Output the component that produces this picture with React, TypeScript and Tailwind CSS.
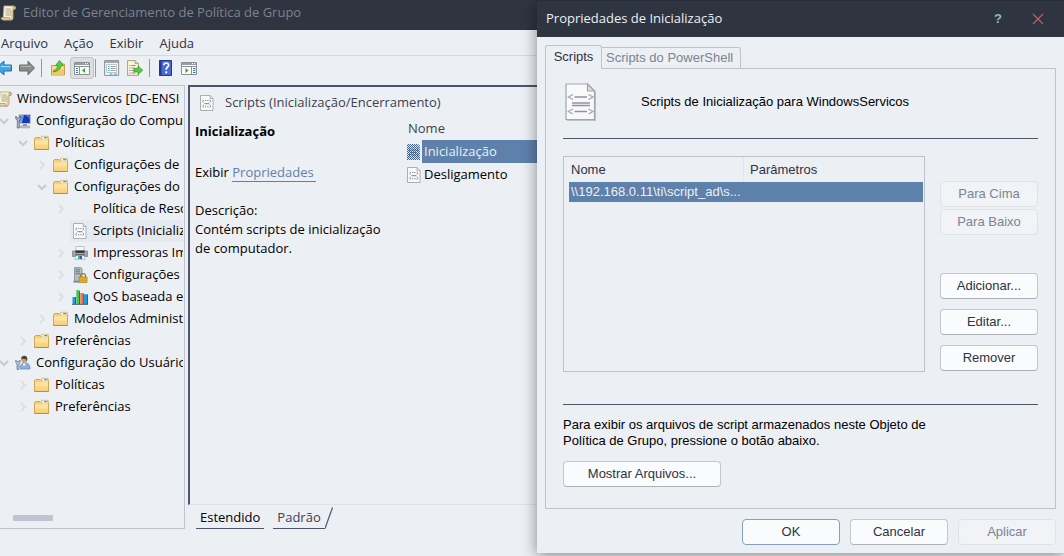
import React from 'react';
import clsx from 'clsx';

/* ---------- icons ---------- */

function ScrollIcon({ clipped = false, className }: { clipped?: boolean; className?: string }) {
  return (
    <svg viewBox={clipped ? '4 0 12 16' : '0 0 16 16'} className={clsx('shrink-0', className)} aria-hidden="true">
      <path d="M4 1h9.500q2 0 2 1.800t-2 1.700H13v8.500q0 2-2 2H3z" fill="#f7f1da" stroke="#b5ab86" strokeWidth=".9" />
      <path d="M13 4.800V2.800q0-1.500 1-1.500 1.500.2 1.500 1.800T13 4.800z" fill="#d8c78f" stroke="#a18f5b" strokeWidth=".7" />
      <path d="M12 5v8q0 1.500-1 1.700" fill="none" stroke="#d6c07c" strokeWidth="1.600" />
      <path d="M1 12.500h8.500q0 2.500 1.800 2.500H3q-2 0-2-2.500z" fill="#e3d5a2" stroke="#a18f5b" strokeWidth=".7" />
      <path d="M5.500 4H11M5.500 6H11M5.500 8H11M5.500 10H11" stroke="#9b957a" strokeWidth=".8" />
    </svg>
  );
}

function FolderIcon() {
  return (
    <svg viewBox="0 0 16 16" className="size-4 shrink-0" aria-hidden="true">
      <path d="M.5 3.500 1.500 2.500H6l1 1h7.500v10.900H.5z" fill="#f3cf7b" stroke="#c9a14c" strokeWidth=".9" />
      <path d="M7.500 1.300h6.700v2.900H7.500z" fill="#fbf8ec" stroke="#c9b47a" strokeWidth=".8" />
      <path d="M10.200 2h3.200v1.200h-3.200z" fill="#4a97e6" />
      <path d="M1 5.300h5.800l1-1H14v9.600H1z" fill="#fde29c" />
      <path d="M1 9.500h13v4.400H1z" fill="#f9d582" />
      <path d="M.5 14.400h14" stroke="#b98c35" />
    </svg>
  );
}

function ScriptIcon({ className = 'size-4' }: { className?: string }) {
  return (
    <svg viewBox="0 0 16 16" className={clsx('shrink-0', className)} aria-hidden="true">
      <path d="M1.500.500h9.500l3 3v12H1.500z" fill="#fbfbfc" stroke="#a3a6aa" strokeWidth=".9" />
      <path d="M11 .5v3h3" fill="#dfe1e4" stroke="#a3a6aa" strokeWidth=".8" />
      <path d="M5 4.800 3.500 6.200 5 7.600M10.500 4.800 12 6.200l-1.500 1.400M5 9.800l-1.500 1.400L5 12.600M10.500 9.800l1.500 1.400-1.500 1.400" fill="none" stroke="#85858f" strokeWidth=".9" />
      <path d="M6 5.500h1.200M8.300 5.500h1.200M5.500 8.700h4.600M6 11.700h1.200M8.300 11.700h1.200" stroke="#6c6c7c" strokeWidth=".9" />
    </svg>
  );
}

function SelectedScriptIcon() {
  return (
    <svg viewBox="0 0 16 16" className="size-4 shrink-0" aria-hidden="true">
      <defs>
        <pattern id="dither" width="2" height="2" patternUnits="userSpaceOnUse">
          <path d="M0 0h1v1H0zM1 1h1v1H1z" fill="#45658f" />
        </pattern>
      </defs>
      <path d="M1 0h11l2 2v14H1z" fill="#dde1e8" />
      <path d="M3.500 4.500v3M11.500 4.500v3M5 6h5M5 8.500h5M5 11h5M3.500 9.500v3M11.500 9.500v3" stroke="#55586a" strokeWidth=".8" />
      <path d="M1 0h11l2 2v14H1z" fill="url(#dither)" />
    </svg>
  );
}

function LargeScriptIcon() {
  return (
    <svg viewBox="0 0 32 38" className="h-[38px] w-8 shrink-0" aria-hidden="true">
      <path d="M2 2h22l7 7.500V38H2z" fill="#bfc1c5" />
      <path d="M1 1h21.500L29.500 8v28.500H1z" fill="#f9f9fa" stroke="#a3a5a9" strokeWidth="1.200" />
      <path d="M22.500 1v7h7z" fill="#dcdde0" stroke="#a3a5a9" strokeWidth="1.200" />
      <path d="M8 11.500 3.500 14 8 16.500M23.500 11.500 28 14l-4.500 2.500M8 26l-4.500 2.500L8 31M23.500 26l4.500 2.500-4.500 2.500" fill="none" stroke="#a9a8b4" strokeWidth="1.400" />
      <path d="M9.500 14H22M9.500 28.500H22" stroke="#9390aa" strokeWidth="1.400" />
      <path d="M7 20h18M7 22.500h18" stroke="#9390aa" strokeWidth="1.400" />
    </svg>
  );
}

function ComputerIcon() {
  return (
    <svg viewBox="0 0 16 16" className="size-4 shrink-0" aria-hidden="true">
      <path d="M4 1.500h11.300v9H4z" fill="#1a35b8" stroke="#bfc4cd" />
      <path d="M4.500 2H9l-2 8H4.500z" fill="#6f9ff0" />
      <path d="M10 2h4.800v4z" fill="#3f6fe0" />
      <path d="M8 11h4v2H8z" fill="#9498a0" />
      <path d="M5.500 13h9v1.800h-9z" fill="#c9cdd3" stroke="#8b8f97" strokeWidth=".6" />
      <path d="M.8 3v3l1.500 1v8h2V7l1.500-1V3L4.500 5H2z" fill="#aebfd4" stroke="#4f5b6e" strokeWidth=".7" />
    </svg>
  );
}

function UserIcon() {
  return (
    <svg viewBox="0 0 16 16" className="size-4 shrink-0" aria-hidden="true">
      <path d="M5.500 14q-.5-5.500 3-6h2.500Q15 8.500 15 14z" fill="#86b2e0" stroke="#5c87b8" strokeWidth=".7" />
      <path d="m7.500 8.500 1.500 3 2-3z" fill="#eef4fb" />
      <ellipse cx="9" cy="4.800" rx="2.600" ry="3.400" fill="#d0a07a" />
      <path d="M6.200 4.800Q5.800.800 9.300.800t3 4.500L11.300 7V4.200Q9 4.500 7.500 3.500z" fill="#54423a" />
      <path d="M.8 5v2.500L2 9v5.500h2V9l1-1.500V5L4 6.500H2z" fill="#b9cbe1" stroke="#5a6c86" strokeWidth=".7" />
    </svg>
  );
}

function PrinterIcon() {
  return (
    <svg viewBox="0 0 16 16" className="size-4 shrink-0" aria-hidden="true">
      <path d="M4 1.500h8V7H4z" fill="#f7f7f8" stroke="#b3b4b8" strokeWidth=".8" />
      <path d="M.4 6h15.200v5.500H.4z" fill="#a2a4a9" stroke="#77797e" strokeWidth=".7" />
      <path d="M3.500 5.500h9v2.300h-9z" fill="#2f3033" />
      <path d="M3 9.500h10v1.800H3z" fill="#303236" />
      <path d="M3.500 10.500h9l.5 4H3z" fill="#edf1f3" stroke="#a2a5aa" strokeWidth=".6" />
      <path d="M6 11h2v3H6z" fill="#2fb5bb" />
      <path d="M8 11h2v3H8z" fill="#2c5fb0" />
    </svg>
  );
}

function ServerLockIcon() {
  return (
    <svg viewBox="0 0 16 16" className="size-4 shrink-0" aria-hidden="true">
      <path d="M2.500.6h6l1.500 1v12.900H2.500z" fill="#b3bfc7" stroke="#7c8992" strokeWidth=".8" />
      <path d="M3.500 2.800h4.500M3.500 4.800h4.500M3.500 6.800h4.500" stroke="#5e6c77" strokeWidth=".9" />
      <path d="M1.500 13.800H7v1.700H1.500z" fill="#77838c" />
      <path d="M8.500 10.500V8.600q0-2 2.500-2t2.500 2v1.900" fill="none" stroke="#8b7a3c" strokeWidth="1.200" />
      <path d="M7 10h8v5.500H7z" fill="#ecb832" stroke="#a87c12" strokeWidth=".7" />
      <path d="M7.500 12h7M7.500 13.700h7" stroke="#b98b18" strokeWidth=".6" />
    </svg>
  );
}

function ChartIcon() {
  return (
    <svg viewBox="0 0 16 16" className="size-4 shrink-0" aria-hidden="true">
      <path d="M.5 8h3v7h-3z" fill="#1f9be6" />
      <path d="M4.300 1h3v14h-3z" fill="#4cc455" />
      <path d="M8.200 4h3v11h-3z" fill="#f77b50" />
      <path d="M12 5.200h3.300V15H12z" fill="#1f9be6" />
      <path d="M3.500 8v7M7.500 2v13M11.400 4.500V15M15.500 5.500V15M0 15.400h16" stroke="#1d2733" strokeWidth=".7" />
    </svg>
  );
}

function ArrowIcon({ back = false }: { back?: boolean }) {
  return back ? (
    <svg viewBox="4 0 12 16" className="h-4 w-3" aria-hidden="true">
      <path d="M0 8 8 1v4h7.500v6H8v4z" fill="#3ba6ea" stroke="#2a6fa8" />
      <path d="M5 6.500h9.500" stroke="#9bdcfb" strokeWidth="1.200" />
    </svg>
  ) : (
    <svg viewBox="0 0 16 16" className="size-4" aria-hidden="true">
      <path d="M15.500 8 9 1.200V5H.5v6H9v3.800z" fill="#8b8b8b" stroke="#6b6b6b" />
      <path d="M1.500 6.300H10l2 1" fill="none" stroke="#b9b9b9" />
    </svg>
  );
}

function UpFolderIcon() {
  return (
    <svg viewBox="0 0 16 16" className="size-4" aria-hidden="true">
      <path d="M1.500 5.500H7L8.500 4h6v11h-13z" fill="#f7d88c" stroke="#c9a14c" />
      <path d="M2 9.500h12v5H2z" fill="#f2c86b" />
      <path d="M3.500 11Q7.500 10 7.800 5.500H5.500L9.500.5l4 5h-2.300Q10 11 3.500 12z" fill="#4fd03c" stroke="#2c8e23" strokeWidth=".7" />
    </svg>
  );
}

function PaneIcon({ right = false }: { right?: boolean }) {
  return (
    <svg viewBox="0 0 16 16" className="size-4" aria-hidden="true">
      <path d="M.5 2.500h15v12H.5z" fill="#fbfbfb" stroke="#8b9096" />
      <path d="M1 3h14v2H1z" fill="#989da4" />
      <path d="M11 3.500h1M13 3.500h1" stroke="#fff" />
      <path d="M.5 6.500h15" stroke="#8b9096" />
      {right ? (
        <>
          <path d="M10.500 6.500v8" stroke="#8b9096" />
          <path d="M12 8.500h2.500M12 10.500h2.500M12 12.500h2.500" stroke="#3c78b8" />
          <path d="M4.500 8v5l3-2.500z" fill="#35a52b" />
        </>
      ) : (
        <>
          <path d="M5.500 6.500v8" stroke="#8b9096" />
          <path d="M2 8.500h2M2 10.500h2M2 12.500h2" stroke="#3c78b8" />
          <path d="M11 8v5l-3-2.500z" fill="#35a52b" />
        </>
      )}
    </svg>
  );
}

function PropertiesIcon() {
  return (
    <svg viewBox="0 0 16 16" className="size-4" aria-hidden="true">
      <path d="M.6.600h14v14.800H.600z" fill="#f4f6f8" stroke="#8b9096" />
      <path d="M1 1h13v2H1z" fill="#a4a9af" />
      <path d="M2.500 4.500h10v8h-10z" fill="#fff" stroke="#b0b5bb" strokeWidth=".8" />
      <path d="M4 6.500h1.500M4 8.500h1.500M4 10.500h1.500" stroke="#3ba6ea" />
      <path d="M6.500 6.500h5M6.500 8.500h5M6.500 10.500h5" stroke="#8f949a" strokeWidth=".9" />
      <path d="M5.500 14h3M10 14h3" stroke="#33a8e8" strokeWidth="1.200" />
    </svg>
  );
}

function ExportIcon() {
  return (
    <svg viewBox="0 0 16 16" className="size-4" aria-hidden="true">
      <path d="M.6.600H8l3.500 3v11.800H.600z" fill="#fbf6dc" stroke="#9d977c" strokeWidth=".9" />
      <path d="M8 .6v3h3.500" fill="#e4dcb8" stroke="#9d977c" strokeWidth=".8" />
      <path d="M2.500 5.500h1M2.500 8h1M2.500 10.500h1M2.500 13h1" stroke="#5b6aa8" />
      <path d="M4.500 5.500h4M4.500 8h3M4.500 10.500h3M4.500 13h4" stroke="#8d8766" />
      <path d="M7 8.500h4V6l4.700 4.200-4.700 4.200v-2.500H7z" fill="#55cf42" stroke="#2f9127" strokeWidth=".7" />
    </svg>
  );
}

function HelpIcon() {
  return (
    <svg viewBox="0 0 16 16" className="size-4" aria-hidden="true">
      <path d="M1.500.500h12v15h-12z" fill="#4a68d0" stroke="#22398f" />
      <path d="M1.500.500h2v15h-2z" fill="#22398f" />
      <path d="M5.800 5.300q0-2.300 2.400-2.300t2.400 2.100q0 1.300-1.300 2.100Q8.200 8 8.200 9.800" fill="none" stroke="#fff" strokeWidth="1.700" />
      <path d="M7.200 11.300h2v2h-2z" fill="#fff" />
    </svg>
  );
}

function Chevron({ open }: { open: boolean }) {
  return (
    <svg viewBox="0 0 8 8" className="size-2 overflow-visible" aria-hidden="true">
      <path d={open ? 'M0 2l4 4 4-4' : 'M2 0l4 4-4 4'} fill="none" stroke={open ? '#c8cbd1' : '#dcdfe4'} strokeWidth="2" />
    </svg>
  );
}

/* ---------- main window ---------- */

type Node = { level: 1 | 2 | 3 | 4; label: string; icon?: React.ReactNode; state?: 'open' | 'closed'; selected?: boolean };

const nodes: Node[] = [
  { level: 1, label: 'Configuração do Compu', icon: <ComputerIcon />, state: 'open' },
  { level: 2, label: 'Políticas', icon: <FolderIcon />, state: 'open' },
  { level: 3, label: 'Configurações de', icon: <FolderIcon />, state: 'closed' },
  { level: 3, label: 'Configurações do', icon: <FolderIcon />, state: 'open' },
  { level: 4, label: 'Política de Reso', state: 'closed' },
  { level: 4, label: 'Scripts (Inicializ', icon: <ScriptIcon />, selected: true },
  { level: 4, label: 'Impressoras Im', icon: <PrinterIcon />, state: 'closed' },
  { level: 4, label: 'Configurações', icon: <ServerLockIcon />, state: 'closed' },
  { level: 4, label: 'QoS baseada e', icon: <ChartIcon />, state: 'closed' },
  { level: 3, label: 'Modelos Administ', icon: <FolderIcon />, state: 'closed' },
  { level: 2, label: 'Preferências', icon: <FolderIcon />, state: 'closed' },
  { level: 1, label: 'Configuração do Usuário', icon: <UserIcon />, state: 'open' },
  { level: 2, label: 'Políticas', icon: <FolderIcon />, state: 'closed' },
  { level: 2, label: 'Preferências', icon: <FolderIcon />, state: 'closed' },
];

const indent = { 1: 'pl-0', 2: 'pl-[19px]', 3: 'pl-[38px]', 4: 'pl-[57px]' };

function Tree() {
  return (
    <nav className="flex w-[185px] shrink-0 flex-col overflow-hidden border-t border-r border-b border-[#bfc3cc] pt-0.5 pr-px text-black">
      <ul role="tree" className="grow overflow-hidden">
        <li role="treeitem" className="flex h-[22px] items-center gap-[5px] whitespace-nowrap">
          <ScrollIcon clipped className="h-4 w-3" />
          WindowsServicos [DC-ENSI
        </li>
        {nodes.map((n, i) => (
          <li key={i} role="treeitem" aria-selected={!!n.selected} className={clsx('flex h-[22px] items-center', indent[n.level])}>
            <span className="flex w-2 shrink-0 justify-center">{n.state && <Chevron open={n.state === 'open'} />}</span>
            <span className={clsx('ml-[5px] flex h-full grow items-center gap-[5px] pl-0.5 whitespace-nowrap', n.selected && 'bg-[#e5e9f0]')}>
              <span className="size-4 shrink-0">{n.icon}</span>
              {n.label}
            </span>
          </li>
        ))}
      </ul>
      <div className="mb-[7px] ml-[13px] h-1.5 w-10 shrink-0 rounded-[1px] bg-[#c1c4ce]" />
    </nav>
  );
}

function ToolButton({ label, className, children }: { label: string; className?: string; children: React.ReactNode }) {
  return (
    <button type="button" aria-label={label} className={clsx('flex shrink-0 items-center justify-center', className)}>
      {children}
    </button>
  );
}

function Toolbar() {
  return (
    <div className="flex h-[27px] shrink-0 items-center border-t border-[#d5dae0] pb-0.5">
      <ToolButton label="Voltar"><ArrowIcon back /></ToolButton>
      <ToolButton label="Avançar" className="ml-[7px]"><ArrowIcon /></ToolButton>
      <span className="ml-1.5 h-[18px] w-px bg-[#9297a0]" />
      <ToolButton label="Um nível acima" className="ml-2"><UpFolderIcon /></ToolButton>
      <ToolButton label="Mostrar árvore" className="ml-1 h-[22px] w-6 rounded-[3px] border border-[#c4c4c6] bg-[#dcdee2]"><PaneIcon /></ToolButton>
      <span className="ml-px h-[18px] w-px bg-[#9297a0]" />
      <ToolButton label="Propriedades" className="ml-2"><PropertiesIcon /></ToolButton>
      <ToolButton label="Exportar lista" className="ml-[7px]"><ExportIcon /></ToolButton>
      <span className="ml-1.5 h-[18px] w-px bg-[#9297a0]" />
      <ToolButton label="Ajuda" className="ml-2"><HelpIcon /></ToolButton>
      <ToolButton label="Mostrar ações" className="ml-[7px]"><PaneIcon right /></ToolButton>
    </div>
  );
}

function DetailPane() {
  return (
    <main className="ml-[3px] flex grow flex-col">
      <section className="flex grow flex-col border-t-2 border-b border-l-2 border-[#4c566a] border-b-[#dfe1e5]">
        <header className="flex h-[31px] items-center gap-2.5 pl-[9px] text-[#3b4252]">
          <ScriptIcon />
          Scripts (Inicialização/Encerramento)
        </header>
        <div className="flex">
          <div className="w-[216px] shrink-0 pt-1 pl-[5px] text-black">
            <h2 className="leading-[19px] font-bold">Inicialização</h2>
            <p className="mt-[22px] leading-[19px]">
              Exibir <a href="#propriedades" className="border-b border-[#5e81ac] pr-0.5 text-[#5e81ac]">Propriedades</a>
            </p>
            <p className="mt-[19px] leading-[19px]">Descrição:</p>
            <p className="leading-[19px]">Contém scripts de inicialização<br />de computador.</p>
          </div>
          <table className="grow border-collapse self-start text-left">
            <thead>
              <tr className="h-[22px] text-[#3b4252]">
                <th className="pl-0.5 font-normal">Nome</th>
              </tr>
            </thead>
            <tbody>
              <tr className="h-[23px]">
                <td className="p-0">
                  <span className="flex items-center text-[#eceff4]">
                    <SelectedScriptIcon />
                    <span className="grow bg-[#5e81ac] pl-0.5 leading-[23px]">Inicialização</span>
                  </span>
                </td>
              </tr>
              <tr className="h-[23px]">
                <td className="p-0">
                  <span className="flex items-center text-black">
                    <ScriptIcon />
                    <span className="pl-0.5 leading-[23px]">Desligamento</span>
                  </span>
                </td>
              </tr>
            </tbody>
          </table>
        </div>
      </section>
      <div role="tablist" className="flex h-6 items-end pl-2">
        <button type="button" role="tab" aria-selected="true" className="h-[21px] border-b border-[#4c566a] px-1 text-black">Estendido</button>
        <button type="button" role="tab" aria-selected="false" className="ml-[9px] h-[21px] border-b border-[#4c566a] px-1 text-[#3b4252]">Padrão</button>
        <svg viewBox="0 0 8 22" className="h-[22px] w-2" aria-hidden="true">
          <path d="M0 21.500 7.500.500" stroke="#4c566a" strokeWidth="1.200" />
        </svg>
      </div>
    </main>
  );
}

/* ---------- dialog ---------- */

type DialogButtonProps = { children: React.ReactNode; disabled?: boolean; primary?: boolean; wide?: boolean };

function DialogButton({ children, disabled, primary, wide }: DialogButtonProps) {
  return (
    <button
      type="button"
      disabled={disabled}
      className={clsx(
        'h-[26px] rounded-[4px] border',
        wide ? 'w-[158px]' : 'w-[98px]',
        disabled
          ? 'border-[#dfe2e7] bg-[#f1f3f7] text-[#7b8494]'
          : primary
            ? 'border-[#81a1c1] bg-[#f9fbfc] text-[#2e3440]'
            : 'border-[#c3c6cd] border-b-[#aeb1b8] bg-[#f9fbfc] text-[#2e3440]',
      )}
    >
      {children}
    </button>
  );
}

function PropertiesDialog() {
  return (
    <div
      role="dialog"
      aria-labelledby="dialog-title"
      className="absolute top-px right-0 w-[527px] bg-[#eceff4] font-['Liberation_Sans',Arial,sans-serif] shadow-[0_2px_14px_rgba(0,0,0,0.45)]"
    >
      <header className="flex h-9 items-center bg-[#2e3440] pr-5 pl-[9px]">
        <h1 id="dialog-title" className="grow font-['Open_Sans','Noto_Sans',sans-serif] text-[#eceff4]">Propriedades de Inicialização</h1>
        <button type="button" aria-label="Ajuda" className="mr-7 w-3 font-bold text-[#8fbcbb]">?</button>
        <button type="button" aria-label="Fechar">
          <svg viewBox="0 0 12 12" className="size-3" aria-hidden="true">
            <path d="M1 1l10 10M11 1 1 11" stroke="#bf616a" strokeWidth="1.100" />
          </svg>
        </button>
      </header>

      <div className="px-2 pt-2">
        <div role="tablist" className="-mb-px flex h-[24px] items-end">
          <button type="button" role="tab" aria-selected="true" className="h-[24px] w-[57px] rounded-t-[3px] border border-b-0 border-[#bfc3cc] bg-[#eceff4] pb-0.5 text-[#2e3440]">Scripts</button>
          <button type="button" role="tab" aria-selected="false" className="h-[22px] w-[139px] rounded-tr-[3px] border border-l-0 border-[#bfc3cc] pl-1 text-left text-[#7b8494]">Scripts do PowerShell</button>
        </div>
        <div className="border border-[#bfc3cc] px-[17px] pt-[14px] pb-[21px]">
          <div className="flex items-center gap-11 pl-0.5">
            <LargeScriptIcon />
            <p className="text-black">Scripts de Inicialização para WindowsServicos</p>
          </div>
          <hr className="mt-[17px] border-[#4c566a]" />

          <div className="mt-[17px] flex h-[216px] items-stretch justify-between">
            <div className="w-[362px] border border-[#bfc3cc] pr-px">
              <table className="w-full table-fixed border-separate border-spacing-0 text-left text-[#2e3440]">
                <colgroup>
                  <col className="w-[180px]" />
                  <col />
                </colgroup>
                <thead>
                  <tr className="h-[25px]">
                    <th className="border-r border-[#e2e5ea] pl-[7px] font-normal">Nome</th>
                    <th className="pl-1.5 font-normal">Parâmetros</th>
                  </tr>
                </thead>
                <tbody>
                  <tr className="h-5 text-[#eceff4]">
                    <td className="p-0 pl-[5px]"><span className="block truncate bg-[#5e81ac] pl-0.5 leading-5">{'\\\\192.168.0.11\\ti\\script_ad\\s...'}</span></td>
                    <td className="bg-[#5e81ac]" />
                  </tr>
                </tbody>
              </table>
            </div>
            <div className="flex flex-col pt-[25px]">
              <div className="flex flex-col gap-0.5">
                <DialogButton disabled>Para Cima</DialogButton>
                <DialogButton disabled>Para Baixo</DialogButton>
              </div>
              <div className="mt-[38px] flex flex-col gap-2.5">
                <DialogButton>Adicionar...</DialogButton>
                <DialogButton>Editar...</DialogButton>
                <DialogButton>Remover</DialogButton>
              </div>
            </div>
          </div>

          <hr className="mt-8 border-[#4c566a]" />
          <p className="mt-3 mb-3 leading-4 text-black">
            Para exibir os arquivos de script armazenados neste Objeto de<br />
            Política de Grupo, pressione o botão abaixo.
          </p>
          <DialogButton wide>Mostrar Arquivos...</DialogButton>
        </div>
      </div>

      <footer className="flex justify-end gap-2.5 px-2 pt-2.5 pb-2">
        <DialogButton primary>OK</DialogButton>
        <DialogButton>Cancelar</DialogButton>
        <DialogButton disabled>Aplicar</DialogButton>
      </footer>
    </div>
  );
}

export default function App() {
  return (
    <div className="relative flex h-screen flex-col overflow-hidden bg-[#eceff4] font-['Open_Sans','Noto_Sans',sans-serif] text-[13px]">
      <header className="flex h-[30px] shrink-0 items-center gap-[7px] bg-[#2e3440] pb-[5px] text-[#7d828c]">
        <ScrollIcon className="size-4" />
        Editor de Gerenciamento de Política de Grupo
      </header>
      <div role="menubar" className="flex h-[25px] shrink-0 items-center gap-4 pt-0.5 pl-px text-[#2e3440]">
        {['Arquivo', 'Ação', 'Exibir', 'Ajuda'].map((m) => (
          <button key={m} type="button" role="menuitem">{m}</button>
        ))}
      </div>
      <Toolbar />
      <div className="mt-[3px] mb-[27px] flex grow">
        <Tree />
        <DetailPane />
      </div>
      <PropertiesDialog />
    </div>
  );
}
